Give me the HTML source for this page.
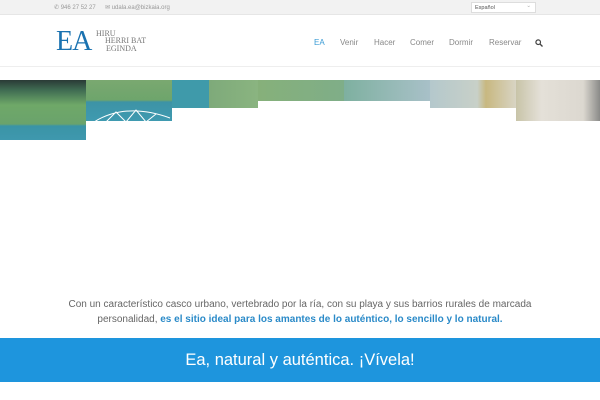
<!DOCTYPE html>
<html><head><meta charset="utf-8"><style>
*{margin:0;padding:0;box-sizing:border-box}
body{width:600px;height:400px;overflow:hidden;background:#fff;font-family:"Liberation Sans","DejaVu Sans",sans-serif;position:relative}
.top{position:absolute;left:0;top:0;width:600px;height:15px;background:#f2f2f2;border-bottom:1px solid #e6e6e6;font-size:6px;color:#999}
.top span{position:absolute;top:4px}
.sel{position:absolute;left:471px;top:2px;width:65px;height:11px;background:#fff;border:1px solid #ddd;font-size:5.5px;color:#555;padding:2px 3px}
.sel:after{content:"⌄";position:absolute;right:4px;top:0;color:#aaa}
.head{position:absolute;top:16px;left:0;width:600px;height:51px;border-bottom:1px solid #eee}
.logo{position:absolute;left:56px;top:12px;font-family:"Liberation Serif",serif;font-size:28px;color:#1a72b0;letter-spacing:-1px;line-height:28px}
.lt{position:absolute;font-family:"Liberation Serif",serif;font-size:8px;color:#777;line-height:8px}
nav a{position:absolute;top:22px;font-size:8px;color:#888;text-decoration:none}
.b{position:absolute;top:80px}
.p{position:absolute;left:0;width:600px;text-align:center;font-size:10px;color:#666;line-height:15px;top:297px}
.p b{color:#2a8ac8}
.band{position:absolute;left:0;top:338px;width:600px;height:44px;background:#1e95dd;color:#fff;text-align:center;font-size:16.5px;line-height:44px}
</style></head><body>
<div class="top"><span style="left:54px">✆ 946 27 52 27</span><span style="left:105px">✉ udala.ea@bizkaia.org</span><div class="sel">Español</div></div>
<div class="head">
<div class="logo">EA</div>
<div class="lt" style="left:96px;top:14px">HIRU</div>
<div class="lt" style="left:105px;top:21px">HERRI BAT</div>
<div class="lt" style="left:106px;top:29px">EGINDA</div>
<nav><a style="left:314px;color:#3a9bd5">EA</a><a style="left:340px">Venir</a><a style="left:374px">Hacer</a><a style="left:410px">Comer</a><a style="left:449px">Dormir</a><a style="left:489px">Reservar</a>
<svg style="position:absolute;left:535px;top:23px" width="8" height="8" viewBox="0 0 8 8"><circle cx="3.2" cy="3.2" r="2.3" fill="none" stroke="#444" stroke-width="1.2"/><path d="M5 5L7.5 7.5" stroke="#444" stroke-width="1.3"/></svg></nav>
</div>
<div class="b" style="left:0;width:86px;height:60px;background:linear-gradient(#2a3a36 0,#3f6b52 10px,#6fa868 25px,#6aa36c 44px,#3a94a6 46px,#3f98ae 60px)"></div>
<div class="b" style="left:86px;width:86px;height:41px;background:linear-gradient(#7aa870 0,#6ea56c 20px,#3d93a6 22px,#3f9ab0 41px)"></div>
<svg class="b" style="left:86px;top:106px" width="86" height="16"><path d="M8 16Q40 -4 84 12M20 16L30 6L40 16L50 4L60 16L70 8" stroke="#fff" fill="none" stroke-width="1"/></svg>
<div class="b" style="left:172px;width:86px;height:28px;background:linear-gradient(90deg,#3f9aaa 0,#3f9aaa 37px,#7eaa7a 37px,#8ab480);"></div>
<div class="b" style="left:258px;width:86px;height:21px;background:linear-gradient(90deg,#86b07a,#7fae88)"></div>
<div class="b" style="left:344px;width:86px;height:21px;background:linear-gradient(90deg,#7eb0a0,#9cbcbc 70%,#a8c0c8)"></div>
<div class="b" style="left:430px;width:86px;height:28px;background:linear-gradient(90deg,#b4c8cc,#c8d0c8 55%,#c8b880 65%,#d8d4c4)"></div>
<div class="b" style="left:516px;width:84px;height:41px;background:linear-gradient(90deg,#c8c4a8,#e4e0d8 30%,#dcd8d0 80%,#8a8a88)"></div>
<div class="p">Con un característico casco urbano, vertebrado por la ría, con su playa y sus barrios rurales de marcada<br>personalidad, <b>es el sitio ideal para los amantes de lo auténtico, lo sencillo y lo natural.</b></div>
<div class="band">Ea, natural y auténtica. ¡Vívela!</div>
</body></html>
